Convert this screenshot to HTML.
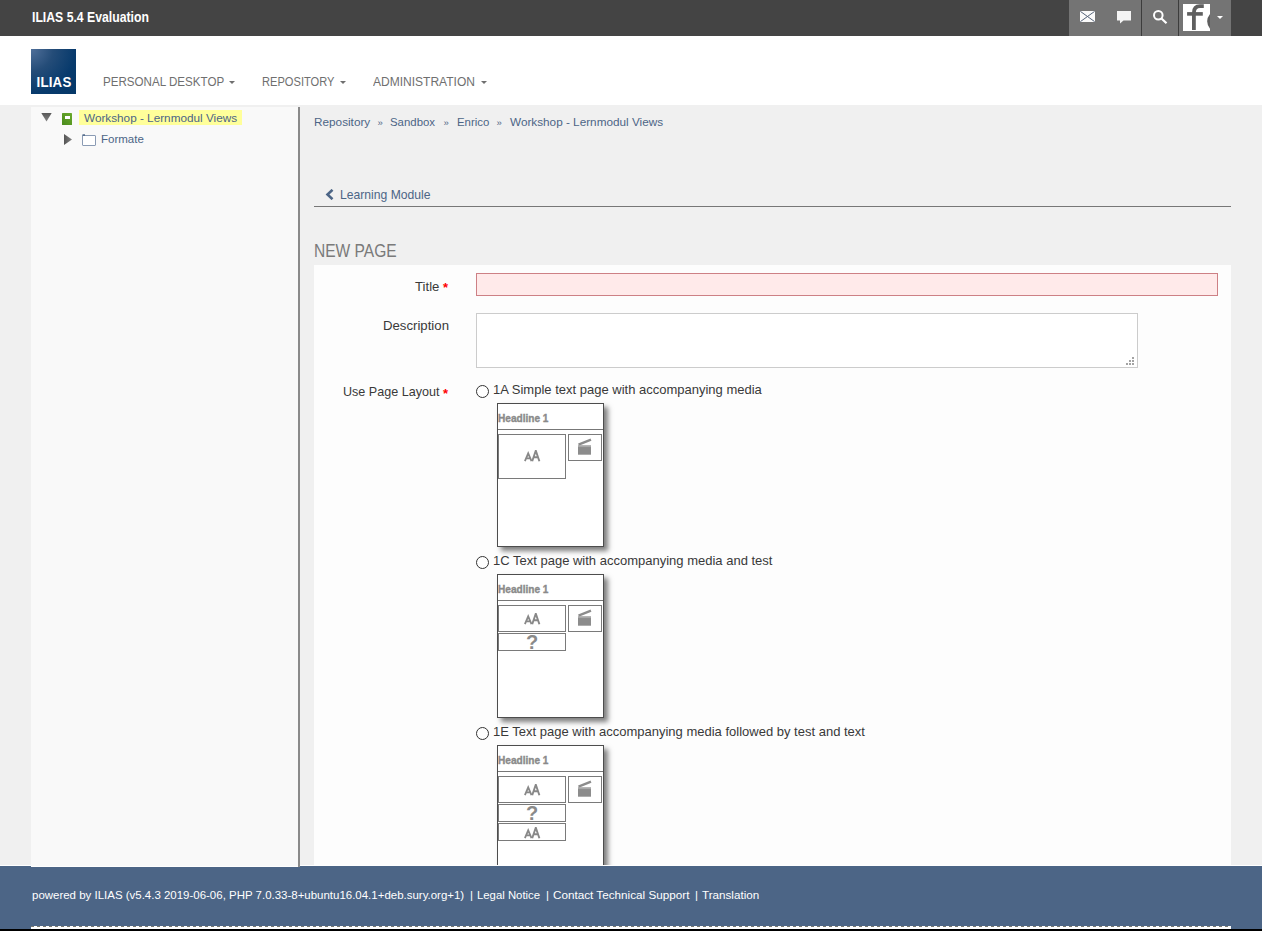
<!DOCTYPE html>
<html><head><meta charset="utf-8">
<style>
*{box-sizing:border-box;margin:0;padding:0}
html,body{width:1262px;height:931px;overflow:hidden;background:#f0f0f0;font-family:"Liberation Sans",sans-serif;position:relative}
.a{position:absolute;white-space:nowrap}
#top{left:0;top:0;width:1262px;height:36px;background:#444}
#brand{left:32px;top:7.6px;color:#fff;font-weight:bold;font-size:12.24px;line-height:16px;transform:scaleY(1.17);transform-origin:0 0}
#icons{left:1069px;top:0;width:162px;height:36px;background:#747474}
#nav{left:0;top:36px;width:1262px;height:69px;background:#fff}
#logo{left:31px;top:49px;width:45px;height:45px;background:radial-gradient(circle at 0 0,#50709a 0,#244c78 35%,#073a6c 70%,#063868 100%);}
#logo span{position:absolute;left:5.5px;top:26px;color:#fff;font-weight:bold;font-size:13.3px;line-height:14px;letter-spacing:0.2px;transform:scaleY(1.08);transform-origin:0 0}
.menu{top:74px;color:#6f6f6f;line-height:14px;transform:scaleY(1.07);transform-origin:0 0}
.caret{position:absolute;width:0;height:0;border-left:3px solid transparent;border-right:3px solid transparent;border-top:3px solid #6f6f6f}
#left{left:31px;top:107px;width:267px;height:759px;background:#f9f9f9}
#divider{left:298px;top:107px;width:2px;height:759px;background:#8a8a8a}
#form{left:314px;top:265px;width:917px;height:601px;background:#fdfdfd}
.lnk{color:#4c6586;line-height:16px}
.bc{color:#4c6586;line-height:16px;font-size:11px}
.lbl{color:#393939;font-size:13px;line-height:16px}
.req{color:#f00;font-size:13px;font-weight:bold;line-height:16px}
#footer{left:0;top:866px;width:1262px;height:65px;background:#4c6586}
.ft{top:888px;color:#fff;line-height:14px}
.th{width:107px;height:144px;border:1px solid #4d4d4d;background:#fff;box-shadow:4px 4px 5px rgba(0,0,0,0.5)}
.hl{color:#8a8a8a;font-weight:bold;font-size:10.1px;line-height:12px;-webkit-text-stroke:0.35px #8a8a8a}
.sep{width:105px;height:1px;background:#777}
.bx{border:1px solid #7a7a7a}
.qm{color:#8a8a8a;font-weight:bold;font-size:20px;line-height:20px}
.radio{width:13px;height:13px;border:1px solid #333;border-radius:50%;background:#fff}
</style></head><body>
<div class="a" id="top"></div>
<div class="a" id="brand">ILIAS 5.4 Evaluation</div>
<div class="a" id="icons"></div>
<div class="a" style="left:1141px;top:0;width:1px;height:36px;background:#3c3c3c"></div>
<div class="a" style="left:1178px;top:0;width:1px;height:36px;background:#3c3c3c"></div>
<svg class="a" style="left:1080px;top:11px" width="15" height="11" viewBox="0 0 15 11"><rect x="0" y="0" width="15" height="11" fill="#fbfbfb"/><path d="M0.4 0.4 L14.6 10.6 M14.6 0.4 L0.4 10.6" stroke="#56647a" stroke-width="1" fill="none"/></svg>
<svg class="a" style="left:1117px;top:11px" width="15" height="13" viewBox="0 0 15 13"><path d="M0 0 H14 V9.5 H6.5 L3 12.5 V9.5 H0 Z" fill="#f4f4f4"/></svg>
<svg class="a" style="left:1152px;top:9px" width="17" height="16" viewBox="0 0 17 16"><circle cx="6.3" cy="6.3" r="4.3" stroke="#fff" stroke-width="2" fill="none"/><path d="M9.5 9.5 L14.5 14.3" stroke="#fff" stroke-width="2.2"/></svg>
<svg class="a" style="left:1183px;top:4px" width="27" height="27" viewBox="0 0 27 27"><rect width="27" height="27" fill="#fff"/><path d="M10.9 26 V8.8 Q10.9 2.2 17 2.2 H20.8" stroke="#5f5f5f" stroke-width="3.8" fill="none"/><rect x="4.1" y="8.1" width="15.7" height="3.6" fill="#5f5f5f"/><path d="M28.5 10.8 Q23.3 17.2 28.5 23.8" stroke="#5f5f5f" stroke-width="3.4" fill="none"/></svg>
<div class="a caret" style="left:1217px;top:16px;border-top-color:#fff;border-left-width:3px;border-right-width:3px;border-top-width:3px"></div>

<div class="a" id="nav"></div>
<div class="a" id="logo"><span>ILIAS</span></div>
<div class="a menu" style="left:103px;font-size:11.6px">PERSONAL DESKTOP</div><div class="a caret" style="left:229px;top:81px"></div>
<div class="a menu" style="left:262px;font-size:11.12px">REPOSITORY</div><div class="a caret" style="left:340px;top:81px"></div>
<div class="a menu" style="left:373px;font-size:12.03px">ADMINISTRATION</div><div class="a caret" style="left:481px;top:81px"></div>

<div class="a" id="left"></div>
<div class="a" id="divider"></div>
<!-- tree -->
<svg class="a" style="left:41px;top:113px" width="11" height="9" viewBox="0 0 11 9"><defs><linearGradient id="gd" x1="0" y1="0" x2="0" y2="1"><stop offset="0" stop-color="#585858"/><stop offset="1" stop-color="#858585"/></linearGradient></defs><path d="M0.3 0 H10.7 L5.5 8.5 Z" fill="url(#gd)"/></svg>
<svg class="a" style="left:62px;top:113px" width="10" height="12" viewBox="0 0 10 12"><defs><linearGradient id="gg" x1="1" y1="0" x2="0" y2="1"><stop offset="0" stop-color="#6aaa2c"/><stop offset="1" stop-color="#4a8a1c"/></linearGradient></defs><rect x="0" y="0" width="10" height="12" rx="0.6" fill="url(#gg)"/><rect x="3" y="3" width="5" height="3" fill="#fff"/></svg>
<div class="a" style="left:79px;top:110px;width:163px;height:15px;background:#ffff9a"></div>
<div class="a lnk" style="left:84px;top:110px;font-size:11.75px">Workshop - Lernmodul Views</div>
<svg class="a" style="left:64px;top:134px" width="8" height="11" viewBox="0 0 8 11"><defs><linearGradient id="gr" x1="0" y1="0" x2="1" y2="0"><stop offset="0" stop-color="#555"/><stop offset="1" stop-color="#808080"/></linearGradient></defs><path d="M0 0 L8 5.5 L0 11 Z" fill="url(#gr)"/></svg>
<svg class="a" style="left:82px;top:134px" width="14" height="12" viewBox="0 0 14 12"><path d="M0.5 1.5 H13 A0.5 0.5 0 0 1 13.5 2 V11 A0.5 0.5 0 0 1 13 11.5 H1 A0.5 0.5 0 0 1 0.5 11 Z" fill="#fff" stroke="#8a9bb4" stroke-width="1"/><rect x="0.5" y="0.3" width="2.5" height="1.5" fill="#4c6586"/></svg>
<div class="a lnk" style="left:101px;top:131px;font-size:11.52px">Formate</div>

<!-- breadcrumb -->
<div class="a lnk" style="left:314px;top:114px;font-size:11.78px">Repository</div>
<div class="a lnk" style="left:377.5px;top:115px;font-size:9.5px">»</div>
<div class="a lnk" style="left:390px;top:114px;font-size:11.42px">Sandbox</div>
<div class="a lnk" style="left:443.5px;top:115px;font-size:9.5px">»</div>
<div class="a lnk" style="left:457px;top:114px;font-size:11.43px">Enrico</div>
<div class="a lnk" style="left:496.5px;top:115px;font-size:9.5px">»</div>
<div class="a lnk" style="left:510px;top:114px;font-size:11.75px">Workshop - Lernmodul Views</div>

<!-- tab -->
<svg class="a" style="left:325px;top:189px" width="10" height="11" viewBox="0 0 10 11"><path d="M7.5 0.8 L2.5 5.5 L7.5 10.2" stroke="#4c6586" stroke-width="2.6" fill="none"/></svg>
<div class="a lnk" style="left:340px;top:187px;font-size:12.16px">Learning Module</div>
<div class="a" style="left:314px;top:206px;width:917px;height:1px;background:#777"></div>

<div class="a" style="left:314px;top:240.3px;color:#7a7a7a;font-size:15.56px;line-height:20px;transform:scaleY(1.12);transform-origin:0 0">NEW PAGE</div>

<div class="a" id="form"></div>
<div class="a lbl" style="left:415px;top:279px;font-size:13.17px">Title</div><div class="a req" style="left:443px;top:280px">*</div>
<div class="a" style="left:476px;top:273px;width:742px;height:23px;background:#ffeaea;border:1px solid #cd8085"></div>
<div class="a lbl" style="left:383px;top:318px;font-size:13.19px">Description</div>
<div class="a" style="left:476px;top:313px;width:662px;height:55px;background:#fff;border:1px solid #ccc"></div>
<svg class="a" style="left:1126px;top:357px" width="9" height="9" viewBox="0 0 9 9"><rect x="6" y="0" width="2" height="2" fill="#a3a3a3"/><rect x="3" y="3" width="2" height="2" fill="#a3a3a3"/><rect x="6" y="3" width="2" height="2" fill="#a3a3a3"/><rect x="0" y="6" width="2" height="2" fill="#a3a3a3"/><rect x="3" y="6" width="2" height="2" fill="#a3a3a3"/><rect x="6" y="6" width="2" height="2" fill="#a3a3a3"/></svg>
<div class="a lbl" style="left:343px;top:384px;font-size:12.58px">Use Page Layout</div><div class="a req" style="left:443px;top:386px">*</div>

<div class="a radio" style="left:476px;top:385px"></div>
<div class="a lbl" style="left:493px;top:382px">1A Simple text page with accompanying media</div>
<div class="a radio" style="left:476px;top:556px"></div>
<div class="a lbl" style="left:493px;top:553px">1C Text page with accompanying media and test</div>
<div class="a radio" style="left:476px;top:727px"></div>
<div class="a lbl" style="left:493px;top:724px">1E Text page with accompanying media followed by test and text</div>

<div class="a th" style="left:497px;top:403px"></div>
<div class="a hl" style="left:498px;top:413px">Headline 1</div>
<div class="a sep" style="left:498px;top:429px"></div>
<div class="a bx" style="left:498px;top:434px;width:68px;height:45px"></div>
<svg class="a" style="left:524px;top:450px" width="17" height="13" viewBox="0 0 17 13"><path d="M0.9 11.2 L4.2 3.4 L7.5 11.2 M2.3 8.4 H6.1" stroke="#888" stroke-width="1.8" fill="none"/><path d="M8.2 11.2 L11.8 0.6 L15.4 11.2 M9.6 7.2 H14" stroke="#888" stroke-width="1.9" fill="none"/></svg>
<div class="a bx" style="left:568px;top:434px;width:34px;height:27px"></div>
<svg class="a" style="left:577px;top:438px" width="16" height="18" viewBox="0 0 16 18"><path d="M1.5 6.6 L14 1.6" stroke="#8c8c8c" stroke-width="2.3" fill="none"/><rect x="1" y="7.5" width="13" height="9.2" fill="#8c8c8c"/><rect x="1" y="7.5" width="13" height="1.6" fill="#a8a8a8"/></svg>
<div class="a th" style="left:497px;top:574px"></div>
<div class="a hl" style="left:498px;top:584px">Headline 1</div>
<div class="a sep" style="left:498px;top:600px"></div>
<div class="a bx" style="left:498px;top:605px;width:68px;height:27px"></div>
<svg class="a" style="left:524px;top:613px" width="17" height="13" viewBox="0 0 17 13"><path d="M0.9 11.2 L4.2 3.4 L7.5 11.2 M2.3 8.4 H6.1" stroke="#888" stroke-width="1.8" fill="none"/><path d="M8.2 11.2 L11.8 0.6 L15.4 11.2 M9.6 7.2 H14" stroke="#888" stroke-width="1.9" fill="none"/></svg>
<div class="a bx" style="left:498px;top:633px;width:68px;height:18px"></div>
<div class="a qm" style="left:526px;top:632px">?</div>
<div class="a bx" style="left:568px;top:605px;width:34px;height:27px"></div>
<svg class="a" style="left:577px;top:609px" width="16" height="18" viewBox="0 0 16 18"><path d="M1.5 6.6 L14 1.6" stroke="#8c8c8c" stroke-width="2.3" fill="none"/><rect x="1" y="7.5" width="13" height="9.2" fill="#8c8c8c"/><rect x="1" y="7.5" width="13" height="1.6" fill="#a8a8a8"/></svg>
<div class="a th" style="left:497px;top:745px"></div>
<div class="a hl" style="left:498px;top:755px">Headline 1</div>
<div class="a sep" style="left:498px;top:771px"></div>
<div class="a bx" style="left:498px;top:776px;width:68px;height:27px"></div>
<svg class="a" style="left:524px;top:784px" width="17" height="13" viewBox="0 0 17 13"><path d="M0.9 11.2 L4.2 3.4 L7.5 11.2 M2.3 8.4 H6.1" stroke="#888" stroke-width="1.8" fill="none"/><path d="M8.2 11.2 L11.8 0.6 L15.4 11.2 M9.6 7.2 H14" stroke="#888" stroke-width="1.9" fill="none"/></svg>
<div class="a bx" style="left:498px;top:804px;width:68px;height:18px"></div>
<div class="a qm" style="left:526px;top:803px">?</div>
<div class="a bx" style="left:498px;top:823px;width:68px;height:18px"></div>
<svg class="a" style="left:524px;top:827px" width="17" height="13" viewBox="0 0 17 13"><path d="M0.9 11.2 L4.2 3.4 L7.5 11.2 M2.3 8.4 H6.1" stroke="#888" stroke-width="1.8" fill="none"/><path d="M8.2 11.2 L11.8 0.6 L15.4 11.2 M9.6 7.2 H14" stroke="#888" stroke-width="1.9" fill="none"/></svg>
<div class="a bx" style="left:568px;top:776px;width:34px;height:27px"></div>
<svg class="a" style="left:577px;top:780px" width="16" height="18" viewBox="0 0 16 18"><path d="M1.5 6.6 L14 1.6" stroke="#8c8c8c" stroke-width="2.3" fill="none"/><rect x="1" y="7.5" width="13" height="9.2" fill="#8c8c8c"/><rect x="1" y="7.5" width="13" height="1.6" fill="#a8a8a8"/></svg>

<div class="a" id="footer"></div>
<div class="a" style="left:0;top:865px;width:31px;height:1px;background:#fff"></div>
<div class="a" style="left:300px;top:865px;width:962px;height:1px;background:#fff"></div>
<div class="a" style="left:31px;top:866px;width:267px;height:1px;background:#fff"></div>
<div class="a" style="left:298px;top:866px;width:2px;height:1px;background:#8a8a8a"></div>
<div class="a ft" style="left:32px;font-size:11.48px">powered by ILIAS (v5.4.3 2019-06-06, PHP 7.0.33-8+ubuntu16.04.1+deb.sury.org+1)</div>
<div class="a ft" style="left:470px;font-size:11.5px">|</div>
<div class="a ft" style="left:477px;font-size:11.35px">Legal Notice</div>
<div class="a ft" style="left:546px;font-size:11.5px">|</div>
<div class="a ft" style="left:553px;font-size:11.71px">Contact Technical Support</div>
<div class="a ft" style="left:695px;font-size:11.5px">|</div>
<div class="a ft" style="left:702px;font-size:11.67px">Translation</div>
<div class="a" style="left:31px;top:926px;width:1200px;height:3px;background:#fff"></div>
<div class="a" style="left:31px;top:926px;width:1200px;height:1px;background:repeating-linear-gradient(90deg,#7a7a72 0,#7a7a72 3px,#fff 3px,#fff 6px)"></div>
<div class="a" style="left:0;top:929px;width:1262px;height:2px;background:#000"></div>
</body></html>
